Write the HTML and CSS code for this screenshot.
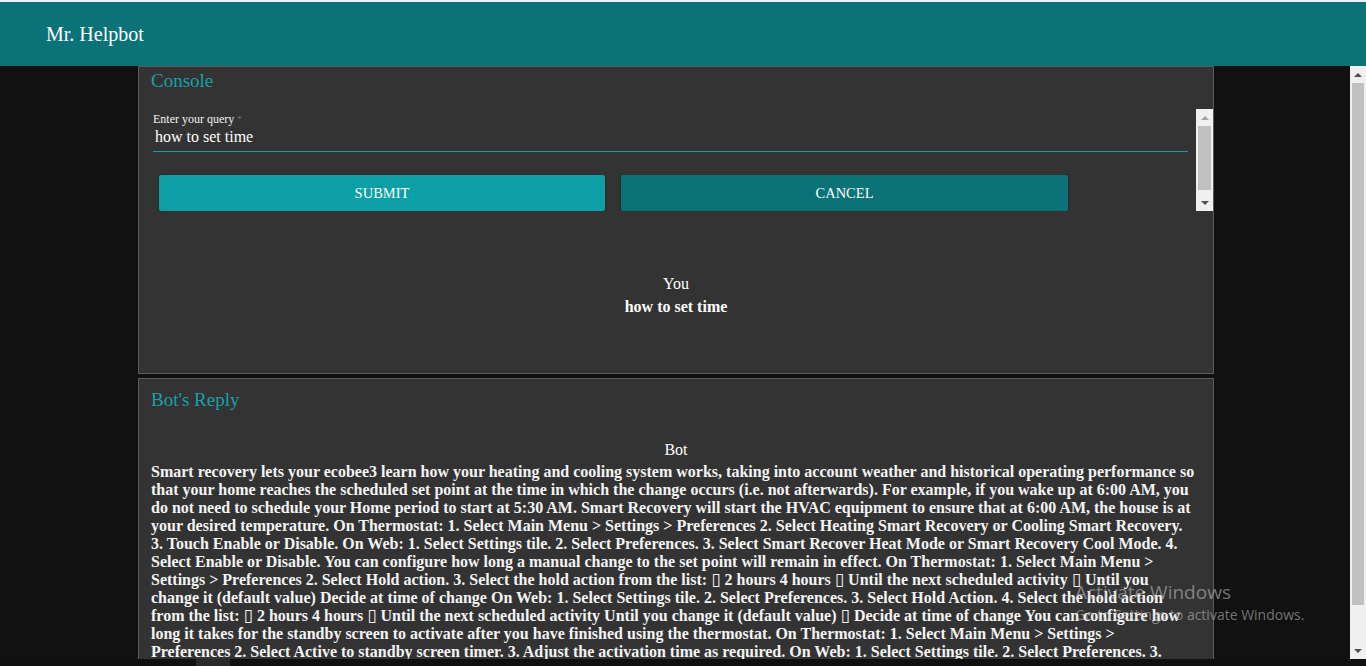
FILE: index.html
```html
<!DOCTYPE html>
<html lang="en">
<head>
<meta charset="utf-8">
<title>Mr. Helpbot</title>
<link rel="stylesheet" href="styles.css">
</head>
<body>
<div class="page">
  <div class="topline"></div>
  <header class="appbar"><span class="brand">Mr. Helpbot</span></header>
  <div class="main">
    <div class="viewport">
      <div class="column">
        <section class="panel console">
          <h2 class="panel-title">Console</h2>
          <div class="formbox">
            <div class="formcontent">
              <label class="field-label">Enter your query <span class="req">*</span></label>
              <div class="field-input">how to set time</div>
              <div class="actions">
                <button class="btn btn-submit">SUBMIT</button>
                <button class="btn btn-cancel">CANCEL</button>
              </div>
            </div>
            <div class="sbar sbar-inner">
              <div class="arrow up light"></div>
              <div class="track"><div class="thumb inner-thumb"></div></div>
              <div class="arrow down dark"></div>
            </div>
          </div>
          <div class="chat">
            <div class="who">You</div>
            <div class="msg">how to set time</div>
          </div>
        </section>
        <section class="panel reply">
          <h2 class="panel-title reply-title">Bot's Reply</h2>
          <div class="who bot">Bot</div>
          <p class="reply-text">Smart recovery lets your ecobee3 learn how your heating and cooling system works, taking into account weather and historical operating performance so that your home reaches the scheduled set point at the time in which the change occurs (i.e. not afterwards). For example, if you wake up at 6:00 AM, you do not need to schedule your Home period to start at 5:30 AM. Smart Recovery will start the HVAC equipment to ensure that at 6:00 AM, the house is at your desired temperature. On Thermostat: 1. Select Main Menu &gt; Settings &gt; Preferences 2. Select Heating Smart Recovery or Cooling Smart Recovery. 3. Touch Enable or Disable. On Web: 1. Select Settings tile. 2. Select Preferences. 3. Select Smart Recover Heat Mode or Smart Recovery Cool Mode. 4. Select Enable or Disable. You can configure how long a manual change to the set point will remain in effect. On Thermostat: 1. Select Main Menu &gt; Settings &gt; Preferences 2. Select Hold action. 3. Select the hold action from the list: <span class="tofu">&#x25AF;</span> 2 hours 4 hours <span class="tofu">&#x25AF;</span> Until the next scheduled activity <span class="tofu">&#x25AF;</span> Until you change it (default value) Decide at time of change On Web: 1. Select Settings tile. 2. Select Preferences. 3. Select Hold Action. 4. Select the hold action from the list: <span class="tofu">&#x25AF;</span> 2 hours 4 hours <span class="tofu">&#x25AF;</span> Until the next scheduled activity Until you change it (default value) <span class="tofu">&#x25AF;</span> Decide at time of change You can configure how long it takes for the standby screen to activate after you have finished using the thermostat. On Thermostat: 1. Select Main Menu &gt; Settings &gt; Preferences 2. Select Active to standby screen timer. 3. Adjust the activation time as required. On Web: 1. Select Settings tile. 2. Select Preferences. 3. Select Active to Standby Screen Timer. 4. Adjust the activation time as required.</p>
        </section>
      </div>
    </div>
    <div class="sbar sbar-page">
      <div class="arrow up dark"></div>
      <div class="track"><div class="thumb page-thumb"></div></div>
      <div class="arrow down dark"></div>
    </div>
  </div>
  <div class="taskbar"><div class="task-item"></div></div>
  <div class="watermark">
    <div class="wm-title">Activate Windows</div>
    <div class="wm-sub">Go to Settings to activate Windows.</div>
  </div>
</div>
</body>
</html>
```

FILE: styles.css
```css
* { box-sizing: border-box; }
html, body { margin: 0; padding: 0; }
body {
  background: #111111;
  font-family: "Liberation Serif", "Times New Roman", serif;
  color: #ffffff;
  overflow: hidden;
}
.page {
  position: relative;
  width: 1366px;
  height: 666px;
  display: flex;
  flex-direction: column;
}
.topline { height: 2px; background: #eef0f0; }
.appbar {
  height: 64px;
  background: #0b7377;
  display: flex;
  align-items: center;
  padding-left: 46px;
}
.brand { font-size: 20px; color: #ffffff; }

.main {
  flex: 1;
  display: flex;
  min-height: 0;
}
.viewport {
  flex: 1;
  overflow: hidden;
  background: #111111;
}
.column {
  width: 1076px;
  margin-left: 138px;
  display: flex;
  flex-direction: column;
  gap: 4px;
}
.panel {
  background: #333333;
  border: 1px solid #5a5a5a;
  padding: 0 12px;
}
.console { height: 308px; }
.panel-title {
  margin: 3px 0 0;
  font-size: 19px;
  font-weight: normal;
  line-height: 22px;
  color: #19a0a6;
}
.reply-title { margin-top: 10px; }

.formbox {
  margin-top: 17px;
  margin-right: -12px;
  height: 102px;
  display: flex;
  overflow: hidden;
}
.formcontent {
  flex: 1;
  padding: 0 8px 0 2px;
}
.field-label {
  display: block;
  margin-top: 3px;
  font-size: 12px;
  line-height: 14px;
  color: #f2f2f2;
}
.req { color: #777; font-size: 9px; vertical-align: top; }
.field-input {
  font-size: 16px;
  line-height: 18px;
  padding: 2px 0 5px 2px;
  border-bottom: 1px solid #1a9a9e;
  color: #ffffff;
}
.actions {
  margin-top: 23px;
  padding-left: 6px;
  display: flex;
  gap: 16px;
}
.btn {
  height: 36px;
  border: none;
  border-radius: 2px;
  color: #ffffff;
  font-family: "Liberation Serif", "Times New Roman", serif;
  font-size: 14.5px;
  box-shadow: 0 1px 3px rgba(0,0,0,0.35);
}
.btn-submit { width: 446px; background: #0ca0a6; }
.btn-cancel { width: 447px; background: #0b7377; }

.sbar {
  display: flex;
  flex-direction: column;
  background: #f0f0f0;
}
.sbar-inner { width: 17px; }
.sbar-page { width: 16px; height: 593px; }
.track { flex: 1; padding: 0 2px; }
.thumb { background: #c1c1c1; }
.inner-thumb { height: 64px; }
.page-thumb { height: 522px; }
.arrow {
  height: 17px;
  display: flex;
  align-items: center;
  justify-content: center;
}
.arrow::before {
  content: "";
  width: 0;
  height: 0;
  border-left: 4px solid transparent;
  border-right: 4px solid transparent;
}
.arrow.up::before { border-bottom: 4px solid #a3a3a3; }
.arrow.up.dark::before { border-bottom-color: #505050; }
.arrow.down::before { border-top: 4px solid #505050; }

.chat {
  margin-top: 61px;
  text-align: center;
}
.who {
  font-size: 16px;
  line-height: 23px;
  text-align: center;
}
.msg {
  font-size: 16px;
  line-height: 23px;
  font-weight: bold;
}
.bot { margin-top: 30px; line-height: 18px; }
.reply-text {
  margin: 4px 0 0;
  padding-right: 5px;
  font-size: 16px;
  line-height: 18px;
  font-weight: bold;
  color: #f4f4f4;
}
.tofu { font-family: "DejaVu Sans", sans-serif; font-weight: normal; font-size: 17px; line-height: 16px; }

.taskbar {
  height: 7px;
  background: #101010;
  padding-left: 196px;
}
.task-item { width: 34px; height: 7px; background: #2a2a2a; }

.watermark {
  position: absolute;
  left: 1075px;
  top: 580px;
  color: rgba(200, 200, 200, 0.55);
  font-family: "Open Sans", "Noto Sans", sans-serif;
  pointer-events: none;
}
.wm-title { font-size: 19px; line-height: 25px; }
.wm-sub { font-size: 14px; line-height: 20px; }
```
